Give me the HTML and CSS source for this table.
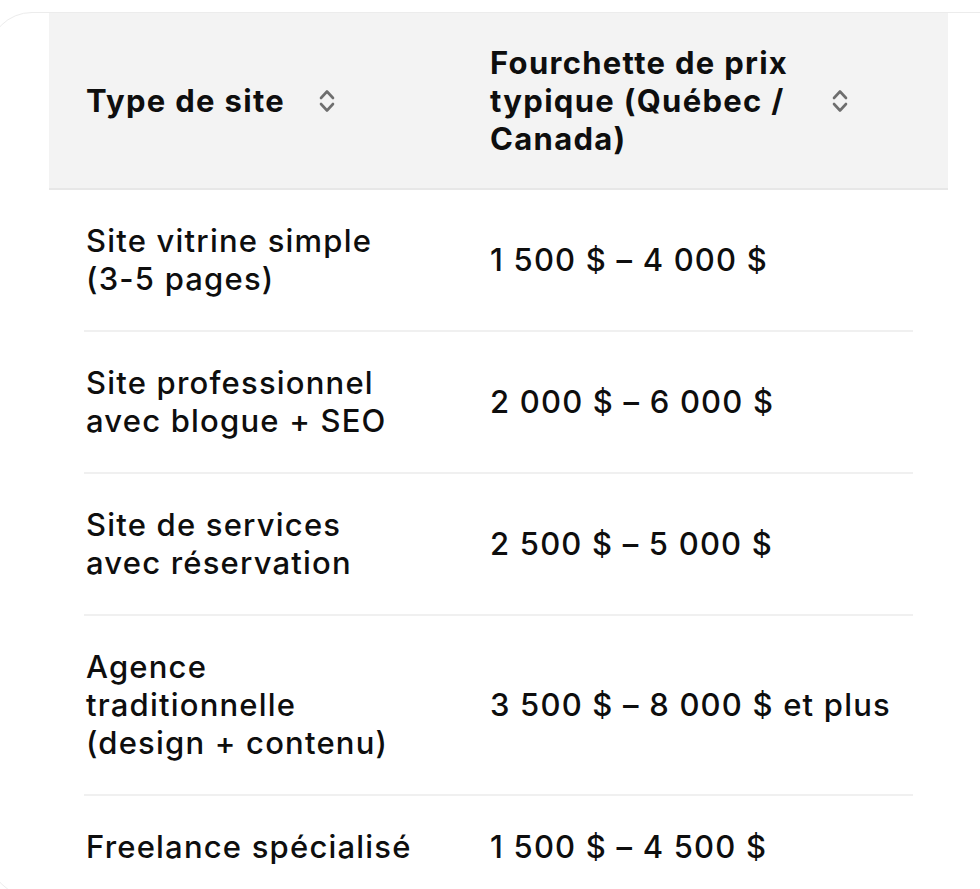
FILE: index.html
```html
<!DOCTYPE html>
<html lang="fr">
<head>
<meta charset="utf-8">
<title>Prix sites web</title>
<link rel="stylesheet" href="styles.css">
</head>
<body>
<div class="card">
  <div class="table">
    <div class="thead">
      <div class="th">
        <span class="th-label th-label-1">Type de site</span>
        <svg class="sort" viewBox="0 0 16 26" width="16" height="26"><path d="M2 10 L8 3.5 L14 10 M2 16 L8 22.5 L14 16"/></svg>
      </div>
      <div class="th">
        <span class="th-label th-label-2">Fourchette de prix typique (Québec / Canada)</span>
        <svg class="sort" viewBox="0 0 16 26" width="16" height="26"><path d="M2 10 L8 3.5 L14 10 M2 16 L8 22.5 L14 16"/></svg>
      </div>
    </div>
    <div class="row">
      <div class="td td-1">Site vitrine simple<br>(3-5 pages)</div>
      <div class="td">1 500 $ – 4 000 $</div>
    </div>
    <div class="row">
      <div class="td td-1">Site professionnel<br>avec blogue + SEO</div>
      <div class="td">2 000 $ – 6 000 $</div>
    </div>
    <div class="row">
      <div class="td td-1">Site de services<br>avec réservation</div>
      <div class="td">2 500 $ – 5 000 $</div>
    </div>
    <div class="row">
      <div class="td td-1">Agence<br>traditionnelle<br>(design + contenu)</div>
      <div class="td">3 500 $ – 8 000 $ et plus</div>
    </div>
    <div class="row row-last">
      <div class="td td-1">Freelance spécialisé</div>
      <div class="td">1 500 $ – 4 500 $</div>
    </div>
  </div>
</div>
</body>
</html>
```

FILE: styles.css
```css
html, body {
  margin: 0;
  padding: 0;
  background: #ffffff;
  overflow: hidden;
}

body {
  font-family: "Inter", "Liberation Sans", sans-serif;
  color: #0e0e0e;
  width: 980px;
  height: 889px;
}

.card {
  margin-top: 12px;
  margin-left: -12px;
  width: 1040px;
  height: 885px;
  border: 1px solid #ececec;
  border-radius: 44px;
  padding-left: 60px;
  box-sizing: border-box;
}

.table {
  width: 899px;
}

.thead {
  display: grid;
  grid-template-columns: 404px 1fr;
  background: #f3f3f3;
  border-bottom: 2px solid #e7e7e7;
  padding: 31px 37px 31px 37px;
  height: 177px;
  box-sizing: border-box;
  align-items: center;
}

.th {
  display: flex;
  align-items: center;
  font-weight: 700;
  font-size: 31px;
  line-height: 38px;
  letter-spacing: 1.3px;
}

.th-label-1 {
  margin-right: 34px;
}

.th-label-2 {
  width: 312px;
  margin-right: 30px;
}

.sort {
  flex: none;
  fill: none;
  stroke: #6e6e6e;
  stroke-width: 2.6;
  stroke-linecap: round;
  stroke-linejoin: round;
}

.row {
  display: grid;
  grid-template-columns: 404px 1fr;
  align-items: center;
  margin: 0 35px;
  padding: 32px 2px;
  border-bottom: 2px solid #f0f0f0;
  font-size: 31px;
  line-height: 38px;
  font-weight: 500;
  letter-spacing: 1.2px;
}

.row-last {
  border-bottom: none;
}
```
